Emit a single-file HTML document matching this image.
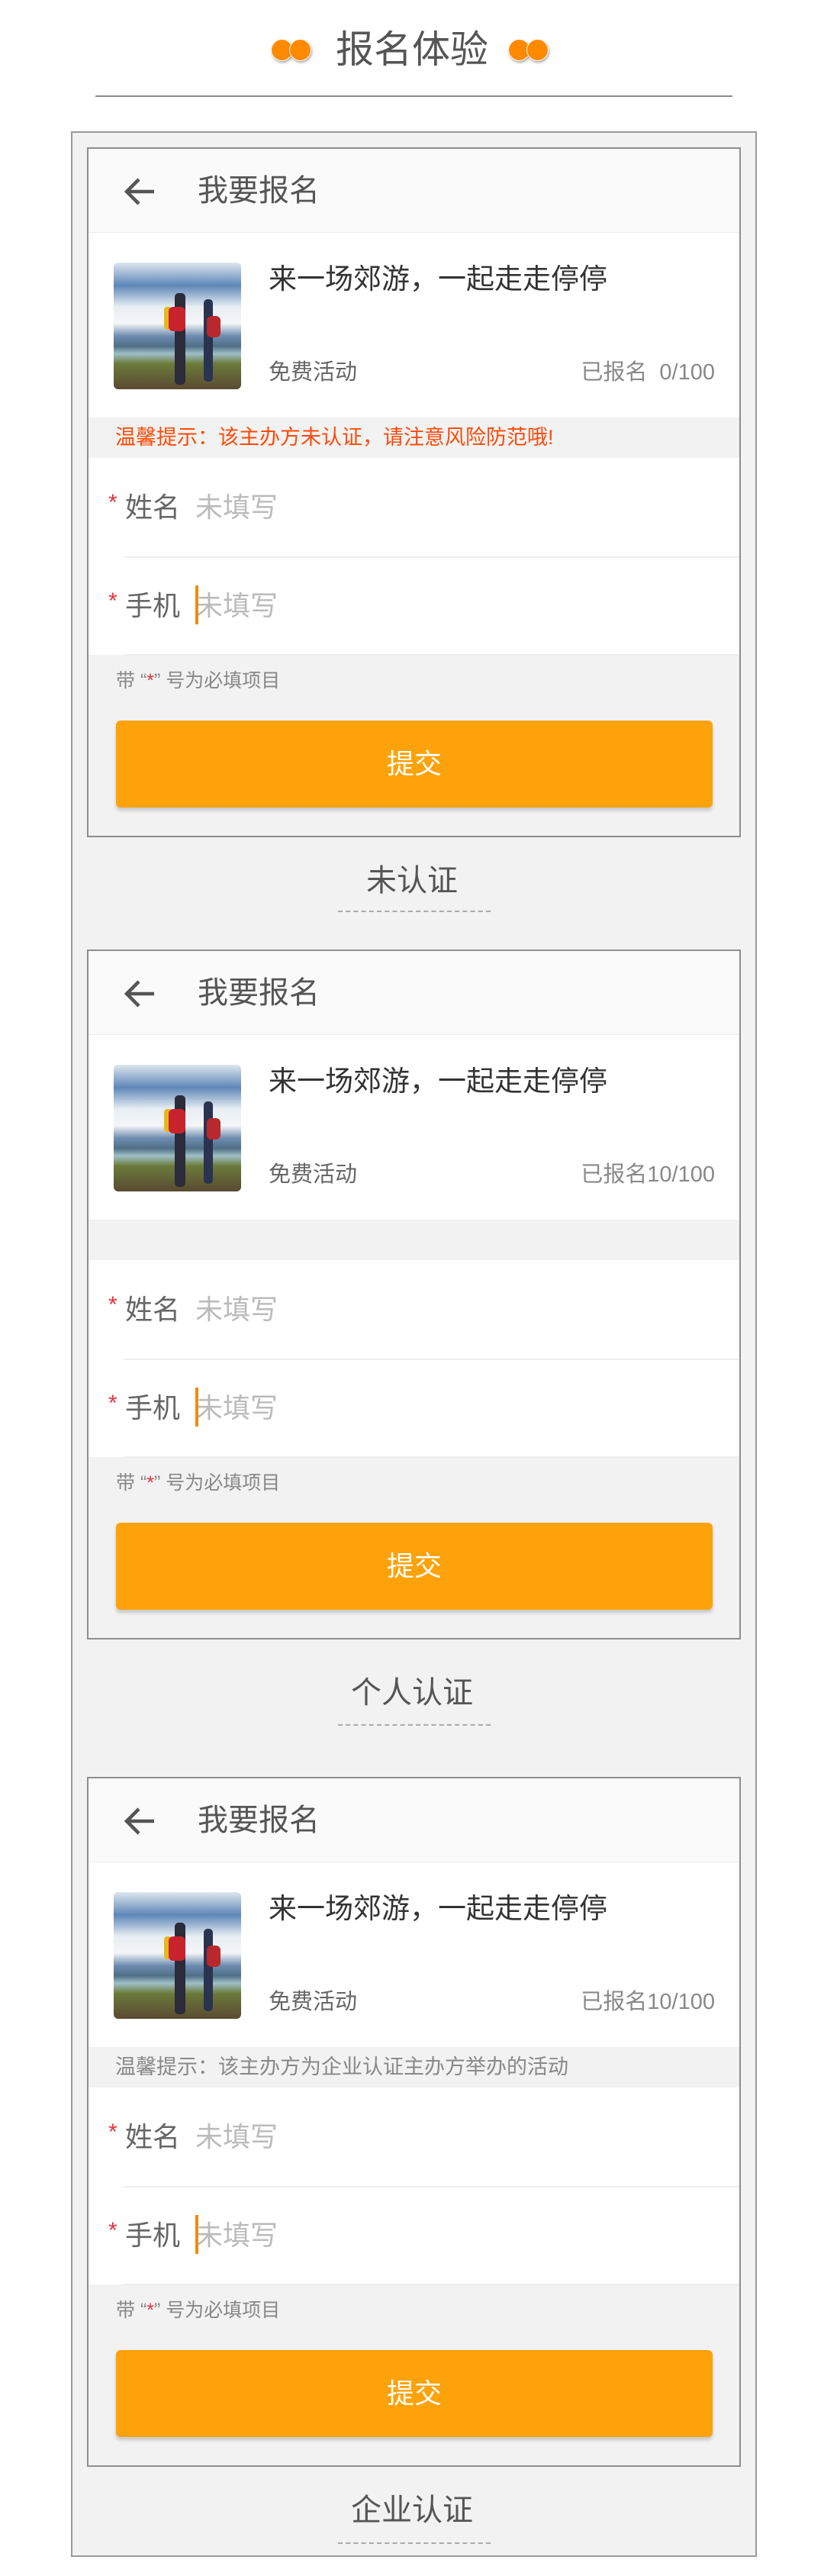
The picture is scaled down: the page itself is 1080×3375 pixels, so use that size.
<!DOCTYPE html>
<html><head><meta charset="utf-8">
<style>
*{margin:0;padding:0;box-sizing:border-box}
body{width:1080px;height:3375px;background:#fff;position:relative;font-family:"Liberation Sans","Noto Sans CJK SC",sans-serif;overflow:hidden}
.abs{position:absolute}
.dots{position:absolute;top:51px;width:56px;height:30px}
.dots i{position:absolute;top:0;width:29px;height:29px;border-radius:50%;background:#ff8a00;border:1.5px solid #fff;box-shadow:1px 2px 3px rgba(0,0,0,.35)}
.title{position:absolute;left:0;width:1080px;top:30px;text-align:center;font-size:50px;line-height:70px;color:#555}
.rule{position:absolute;left:125px;width:835px;top:125px;height:2px;background:#8a8a8a}
.outer{position:absolute;left:93px;top:172px;width:899px;height:3178px;background:#f2f2f2;border:2px solid #9a9a9a}
.card{position:absolute;left:114px;width:857px;height:904px;background:#f2f2f2;border:2px solid #8e8e8e}
.hdr{position:absolute;left:0;top:0;width:100%;height:110px;background:#fafafa;border-bottom:1px solid #ececec}
.hdr svg{position:absolute;left:46px;top:36px}
.hdr .t{position:absolute;left:143px;top:28px;font-size:40px;line-height:54px;color:#555}
.info{position:absolute;left:0;top:110px;width:100%;height:242px;background:#fff}
.pic{position:absolute;left:33px;top:39px;width:167px;height:166px;border-radius:6px;overflow:hidden;
background:linear-gradient(180deg,#dfe6ee 0%,#5d87b8 18%,#e8eef4 35%,#f4f6f8 48%,#6e8cb0 58%,#4f6f86 66%,#9fc0c6 72%,#6a7a3a 80%,#5a4a32 100%)}
.pic .m1{position:absolute;left:80px;top:40px;width:14px;height:120px;background:#2b2b3a;border-radius:5px}
.pic .b1{position:absolute;left:72px;top:58px;width:22px;height:32px;background:#c8222c;border-radius:6px}
.pic .y1{position:absolute;left:66px;top:58px;width:10px;height:30px;background:#e6b81c;border-radius:4px}
.pic .m2{position:absolute;left:118px;top:48px;width:12px;height:108px;background:#2a3350;border-radius:5px}
.pic .b2{position:absolute;left:122px;top:70px;width:18px;height:28px;background:#b8282c;border-radius:6px}
.atitle{position:absolute;left:236px;top:36px;font-size:37px;line-height:50px;color:#333}
.free{position:absolute;left:236px;top:163px;font-size:29px;line-height:40px;color:#666}
.cnt{position:absolute;right:32px;top:163px;font-size:29px;line-height:40px;color:#888}
.tip{position:absolute;left:0;top:352px;width:100%;height:53px;background:#f2f2f2;font-size:27px;line-height:53px;padding-left:35px}
.form{position:absolute;left:0;top:405px;width:100%;height:258px;background:#fff}
.row{position:absolute;left:0;width:100%;height:129px}
.row .star{position:absolute;left:26px;top:44px;color:#e8333a;font-size:30px;line-height:30px}
.row .lab{position:absolute;left:48px;top:40px;font-size:36px;line-height:50px;color:#666}
.row .ph{position:absolute;left:140px;top:40px;font-size:36px;line-height:50px;color:#bbb}
.row .cur{position:absolute;left:140px;top:38px;width:4px;height:51px;background:#f08a10}
.sep{position:absolute;left:46px;right:0;height:2px;background:#eeeeee}
.hint{position:absolute;left:36px;top:680px;font-size:25px;line-height:34px;color:#888}
.hint b{color:#e8333a;font-weight:normal}
.btn{position:absolute;left:36px;top:749px;width:782px;height:114px;background:#fea20a;border-radius:6px;box-shadow:0 4px 5px rgba(0,0,0,.18);color:#fff;font-size:36px;line-height:114px;text-align:center}
.cap{position:absolute;left:0;width:1080px;text-align:center;font-size:40px;line-height:54px;color:#555}
.dash{position:absolute;left:443px;width:200px;border-top:2px dashed #aaa}
</style></head><body>
<div class="dots" style="left:355px"><i style="left:0"></i><i style="left:24px"></i></div>
<div class="dots" style="left:666px"><i style="left:0"></i><i style="left:24px"></i></div>
<div class="title">报名体验</div>
<div class="rule"></div>
<div class="outer"></div>

<div class="card" style="top:193px">
 <div class="hdr"><svg width="44" height="40" viewBox="0 0 44 40"><path d="M40 20H6M20 4L4 20l16 16" fill="none" stroke="#555" stroke-width="4.5"/></svg><div class="t">我要报名</div></div>
 <div class="info"><div class="pic"><i class="m1 abs"></i><i class="y1 abs"></i><i class="b1 abs"></i><i class="m2 abs"></i><i class="b2 abs"></i></div>
  <div class="atitle">来一场郊游，一起走走停停</div><div class="free">免费活动</div><div class="cnt">已报名&nbsp;&nbsp;0/100</div></div>
 <div class="tip" style="color:#ff4a0a">温馨提示：该主办方未认证，请注意风险防范哦!</div>
 <div class="form">
  <div class="row" style="top:0"><span class="star">*</span><span class="lab">姓名</span><span class="ph">未填写</span></div>
  <div class="sep" style="top:129px"></div>
  <div class="row" style="top:129px"><span class="star">*</span><span class="lab">手机</span><span class="ph">未填写</span><span class="cur"></span></div>
  <div class="sep" style="top:257px"></div>
 </div>
 <div class="hint">带 “<b>*</b>” 号为必填项目</div>
 <div class="btn">提交</div>
</div>
<div class="cap" style="top:1127px">未认证</div>
<div class="dash" style="top:1193px"></div>

<div class="card" style="top:1244px">
 <div class="hdr"><svg width="44" height="40" viewBox="0 0 44 40"><path d="M40 20H6M20 4L4 20l16 16" fill="none" stroke="#555" stroke-width="4.5"/></svg><div class="t">我要报名</div></div>
 <div class="info"><div class="pic"><i class="m1 abs"></i><i class="y1 abs"></i><i class="b1 abs"></i><i class="m2 abs"></i><i class="b2 abs"></i></div>
  <div class="atitle">来一场郊游，一起走走停停</div><div class="free">免费活动</div><div class="cnt">已报名10/100</div></div>
 <div class="tip"></div>
 <div class="form">
  <div class="row" style="top:0"><span class="star">*</span><span class="lab">姓名</span><span class="ph">未填写</span></div>
  <div class="sep" style="top:129px"></div>
  <div class="row" style="top:129px"><span class="star">*</span><span class="lab">手机</span><span class="ph">未填写</span><span class="cur"></span></div>
  <div class="sep" style="top:257px"></div>
 </div>
 <div class="hint">带 “<b>*</b>” 号为必填项目</div>
 <div class="btn">提交</div>
</div>
<div class="cap" style="top:2191px">个人认证</div>
<div class="dash" style="top:2259px"></div>

<div class="card" style="top:2328px">
 <div class="hdr"><svg width="44" height="40" viewBox="0 0 44 40"><path d="M40 20H6M20 4L4 20l16 16" fill="none" stroke="#555" stroke-width="4.5"/></svg><div class="t">我要报名</div></div>
 <div class="info"><div class="pic"><i class="m1 abs"></i><i class="y1 abs"></i><i class="b1 abs"></i><i class="m2 abs"></i><i class="b2 abs"></i></div>
  <div class="atitle">来一场郊游，一起走走停停</div><div class="free">免费活动</div><div class="cnt">已报名10/100</div></div>
 <div class="tip" style="color:#888">温馨提示：该主办方为企业认证主办方举办的活动</div>
 <div class="form">
  <div class="row" style="top:0"><span class="star">*</span><span class="lab">姓名</span><span class="ph">未填写</span></div>
  <div class="sep" style="top:129px"></div>
  <div class="row" style="top:129px"><span class="star">*</span><span class="lab">手机</span><span class="ph">未填写</span><span class="cur"></span></div>
  <div class="sep" style="top:257px"></div>
 </div>
 <div class="hint">带 “<b>*</b>” 号为必填项目</div>
 <div class="btn">提交</div>
</div>
<div class="cap" style="top:3262px">企业认证</div>
<div class="dash" style="top:3331px"></div>
</body></html>
